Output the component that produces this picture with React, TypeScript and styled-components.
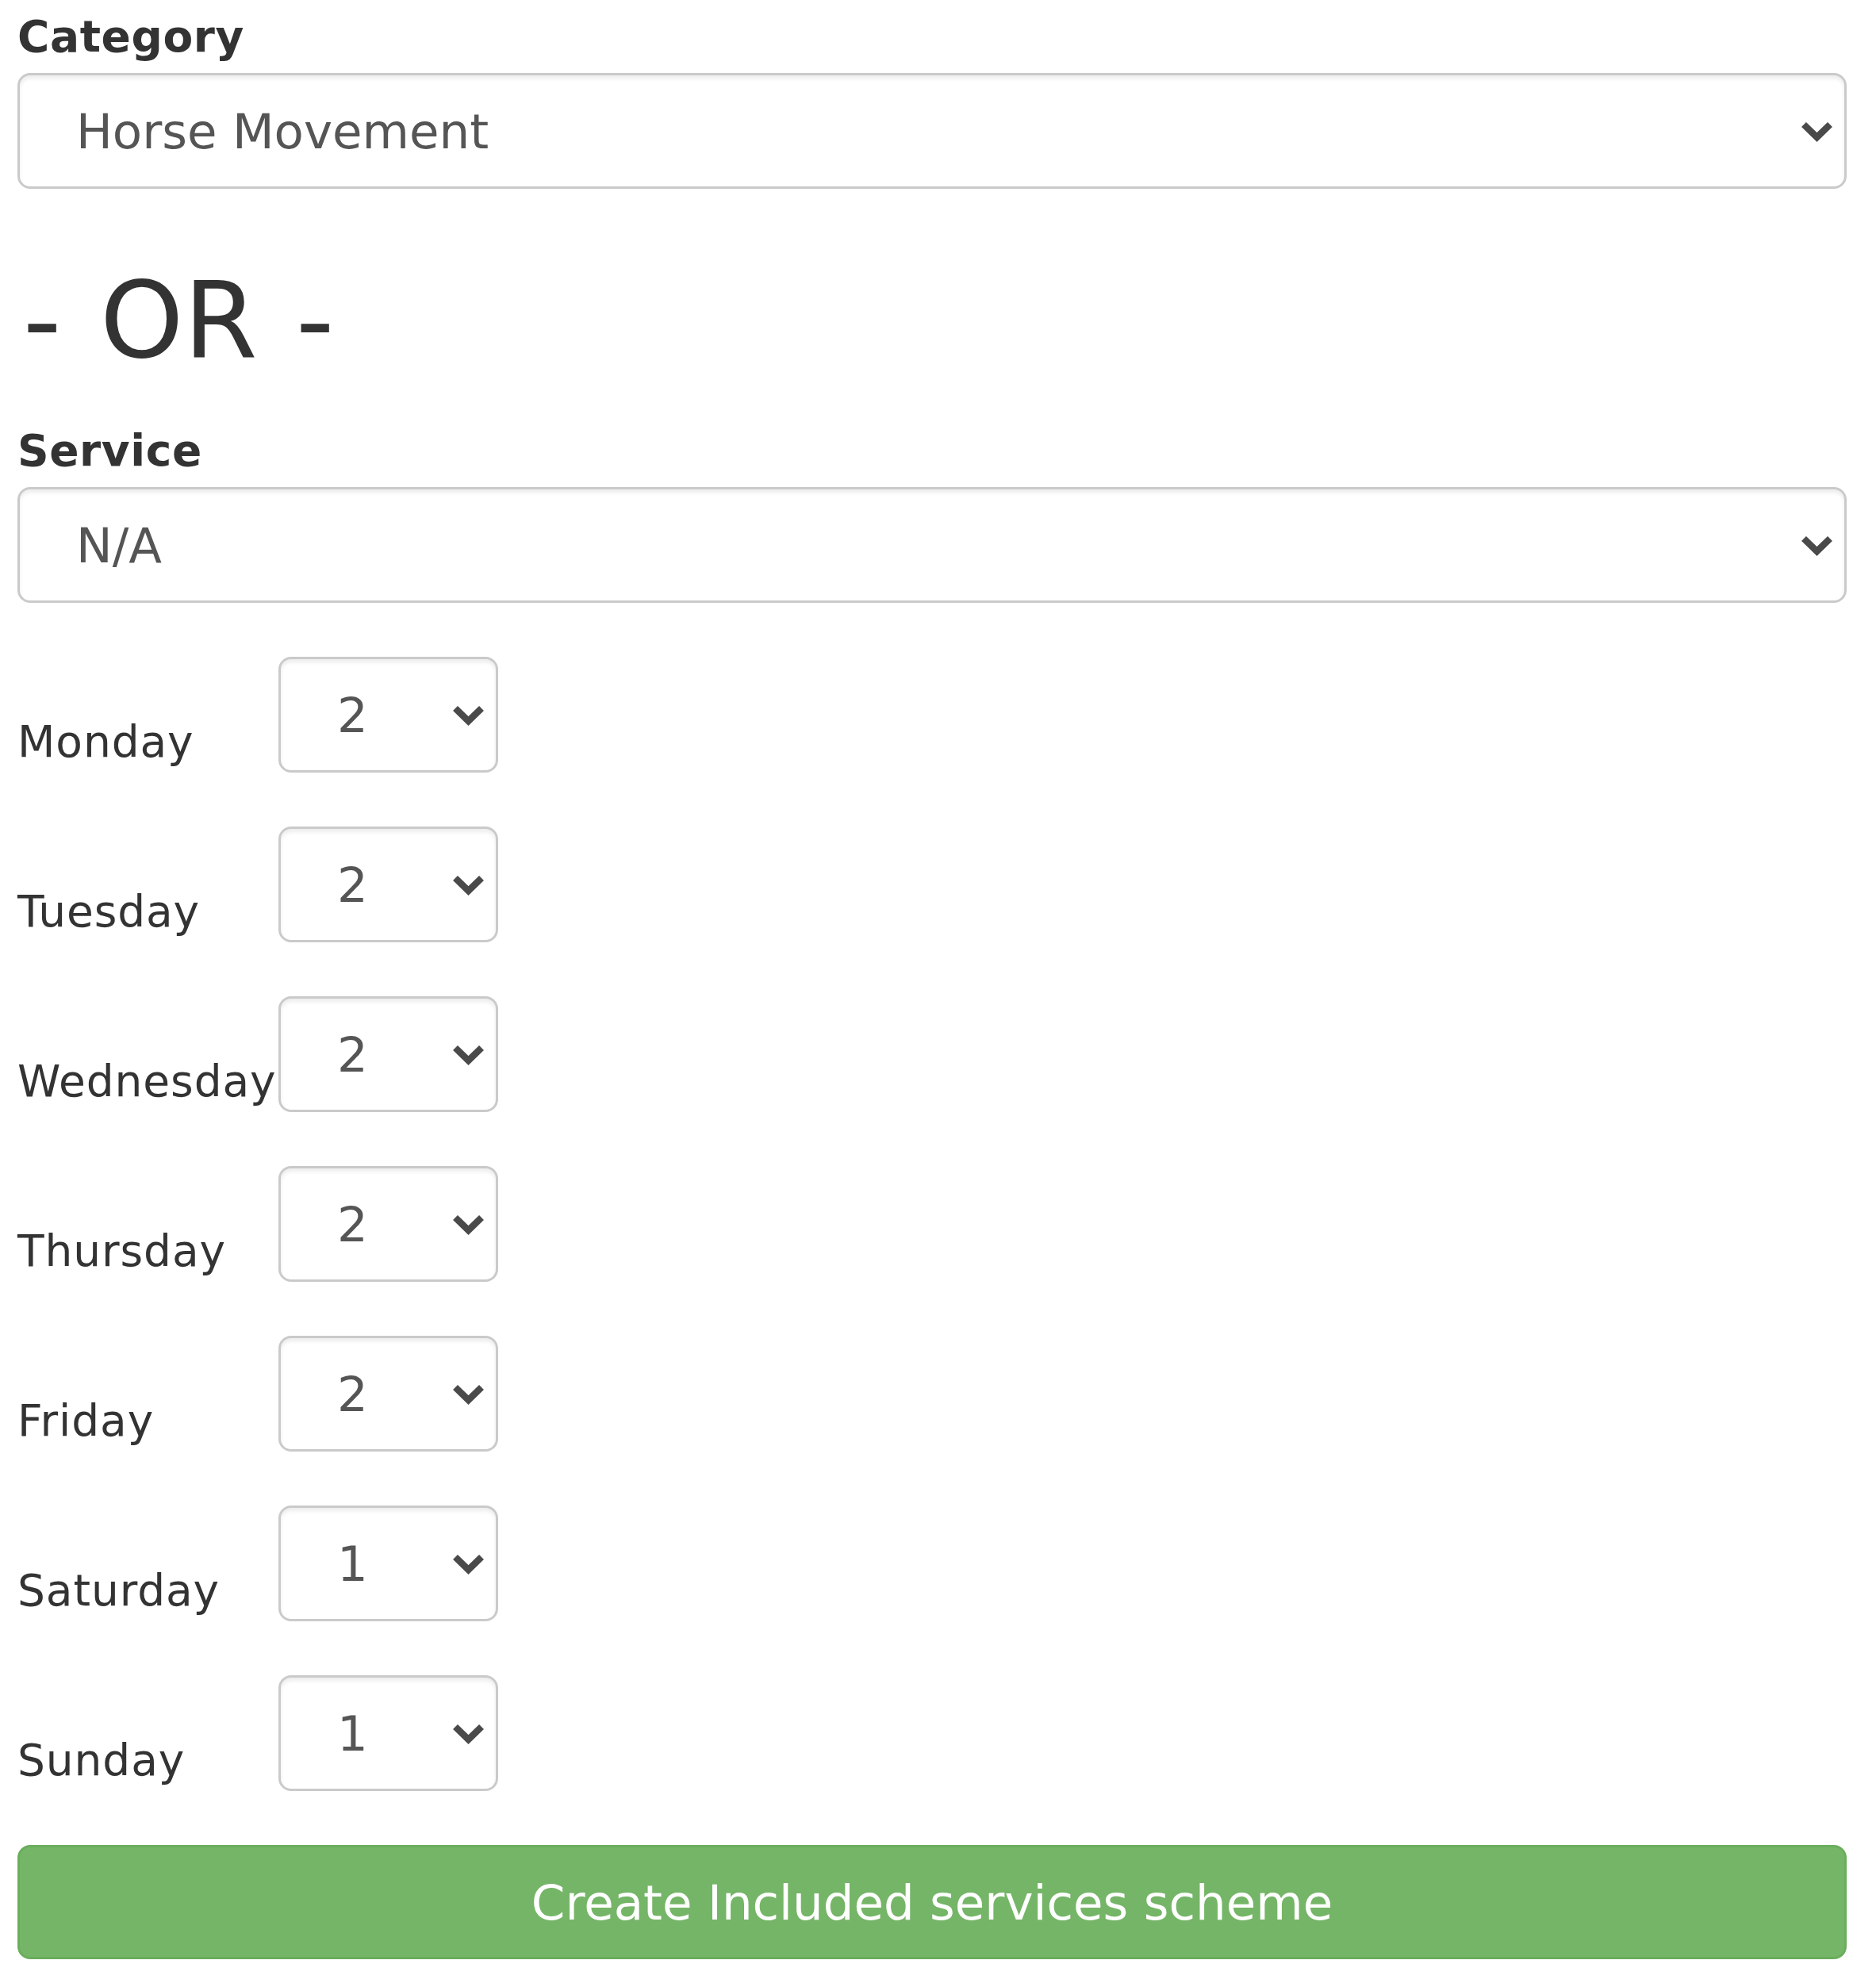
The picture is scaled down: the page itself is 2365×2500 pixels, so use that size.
import React from 'react'
import styled, { createGlobalStyle } from 'styled-components'

const GlobalStyle = createGlobalStyle`
  html, body {
    margin: 0;
    padding: 0;
    background: #fff;
  }
  body {
    font-family: Verdana, "DejaVu Sans", sans-serif;
    color: #333;
  }
`

const days = [
  { name: 'Monday', value: '2' },
  { name: 'Tuesday', value: '2' },
  { name: 'Wednesday', value: '2' },
  { name: 'Thursday', value: '2' },
  { name: 'Friday', value: '2' },
  { name: 'Saturday', value: '1' },
  { name: 'Sunday', value: '1' },
]

const Chevron = () => (
  <StyledChevron viewBox="0 0 41 26" aria-hidden="true">
    <polyline points="4,4 20.5,20 37,4" />
  </StyledChevron>
)

const SelectBox = ({ value, options, small }: { value: string; options: string[]; small?: boolean }) => (
  <StyledSelectWrap $small={small}>
    <StyledSelect defaultValue={value}>
      {options.map((o) => (
        <option key={o} value={o}>
          {o}
        </option>
      ))}
    </StyledSelect>
    <Chevron />
  </StyledSelectWrap>
)

export default function App() {
  return (
    <>
      <GlobalStyle />
      <StyledForm onSubmit={(e) => e.preventDefault()}>
        <StyledGroup>
          <StyledFieldLabel>Category</StyledFieldLabel>
          <SelectBox value="Horse Movement" options={['Horse Movement', 'Feeding', 'Grooming']} />
        </StyledGroup>

        <StyledOr>- OR -</StyledOr>

        <StyledGroup>
          <StyledFieldLabel>Service</StyledFieldLabel>
          <SelectBox value="N/A" options={['N/A', 'Turnout', 'Bring in']} />
        </StyledGroup>

        <StyledDays>
          {days.map((d) => (
            <StyledDayRow key={d.name}>
              <StyledDayLabel>{d.name}</StyledDayLabel>
              <SelectBox small value={d.value} options={['0', '1', '2', '3', '4']} />
            </StyledDayRow>
          ))}
        </StyledDays>

        <StyledButton type="submit">Create Included services scheme</StyledButton>
      </StyledForm>
    </>
  )
}

const StyledForm = styled.form`
  display: flex;
  flex-direction: column;
  padding: 14px 37px 40px 22px;
`

const StyledGroup = styled.div`
  display: flex;
  flex-direction: column;
`

const StyledFieldLabel = styled.label`
  font-size: 55px;
  line-height: 64px;
  font-weight: 700;
  letter-spacing: 0.6px;
  color: #333;
  margin-bottom: 14px;
`

const StyledOr = styled.h1`
  margin: 88px 0 54px;
  padding-left: 7px;
  font-size: 134px;
  line-height: 156px;
  font-weight: 400;
  color: #333;
  white-space: pre;
  word-spacing: 6px;
`

const StyledSelectWrap = styled.div<{ $small?: boolean }>`
  position: relative;
  width: ${(p) => (p.$small ? '277px' : '100%')};
  height: 146px;
  flex-shrink: 0;
`

const StyledSelect = styled.select`
  appearance: none;
  -webkit-appearance: none;
  box-sizing: border-box;
  width: 100%;
  height: 100%;
  margin: 0;
  padding: 0 70px 0 71px;
  border: 3px solid #cacaca;
  border-radius: 16px;
  background: #fff;
  box-shadow: inset 0 4px 5px rgba(0, 0, 0, 0.075);
  font-family: Verdana, "DejaVu Sans", sans-serif;
  font-size: 61px;
  color: #555;
  outline: none;
`

const StyledChevron = styled.svg`
  position: absolute;
  right: 17px;
  top: 50%;
  width: 41px;
  height: 26px;
  margin-top: -12px;
  pointer-events: none;
  fill: none;
  stroke: #4a4a4a;
  stroke-width: 8.5;
  stroke-linecap: butt;
  stroke-linejoin: miter;
`

const StyledDays = styled.div`
  display: flex;
  flex-direction: column;
  gap: 68px;
  margin: 68px 0;
`

const StyledDayRow = styled.div`
  display: flex;
  align-items: flex-end;
`

const StyledDayLabel = styled.label`
  width: 329px;
  flex-shrink: 0;
  padding-bottom: 7px;
  box-sizing: border-box;
  font-size: 55px;
  line-height: 64px;
  letter-spacing: 0.9px;
  color: #333;
  white-space: nowrap;
`

const StyledButton = styled.button`
  box-sizing: border-box;
  width: 100%;
  height: 144px;
  margin: 0;
  border: 3px solid #6aae5c;
  border-radius: 16px;
  background: #75b567;
  color: #fff;
  font-family: Verdana, "DejaVu Sans", sans-serif;
  font-size: 61px;
  cursor: pointer;
`
